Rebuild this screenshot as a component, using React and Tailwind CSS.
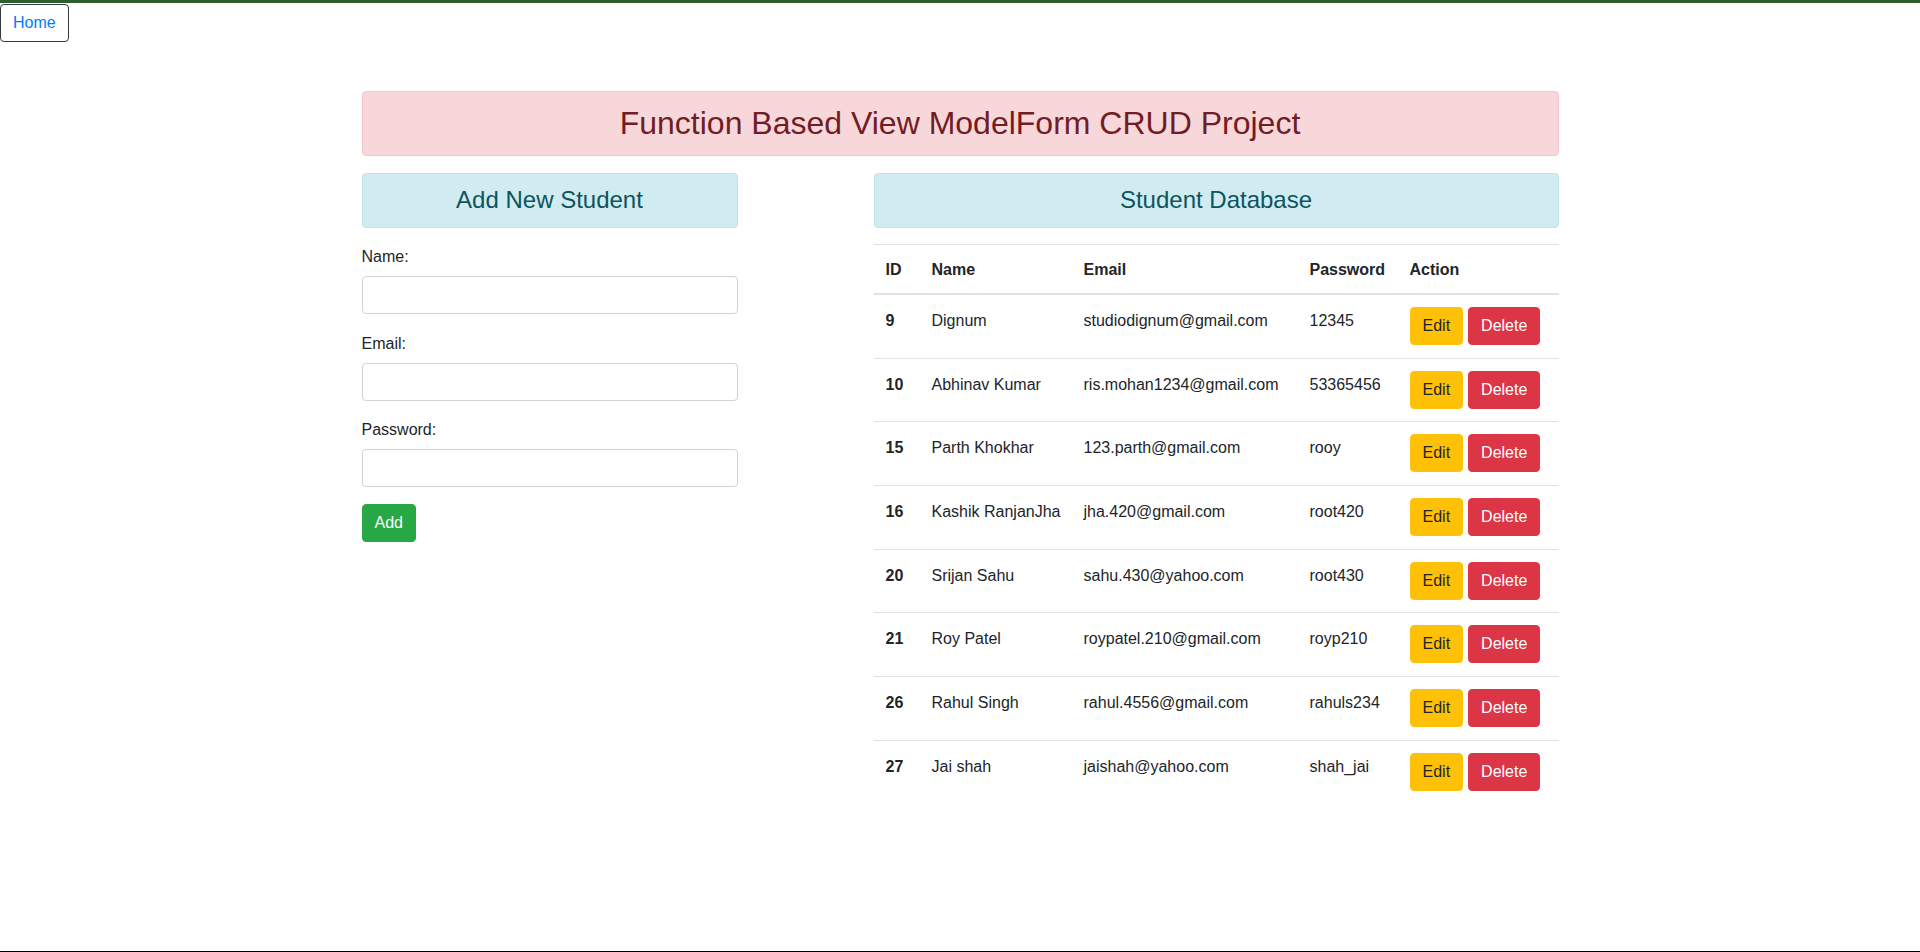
import React from "react";

const students = [
  { id: 9, name: "Dignum", email: "studiodignum@gmail.com", password: "12345" },
  { id: 10, name: "Abhinav Kumar", email: "ris.mohan1234@gmail.com", password: "53365456" },
  { id: 15, name: "Parth Khokhar", email: "123.parth@gmail.com", password: "rooy" },
  { id: 16, name: "Kashik RanjanJha", email: "jha.420@gmail.com", password: "root420" },
  { id: 20, name: "Srijan Sahu", email: "sahu.430@yahoo.com", password: "root430" },
  { id: 21, name: "Roy Patel", email: "roypatel.210@gmail.com", password: "royp210" },
  { id: 26, name: "Rahul Singh", email: "rahul.4556@gmail.com", password: "rahuls234" },
  { id: 27, name: "Jai shah", email: "jaishah@yahoo.com", password: "shah_jai" },
];

function Field({ label, type }) {
  return (
    <div className="mb-[16.5px]">
      <label className="mb-2 block pt-px leading-6">{label}</label>
      <input
        type={type}
        className="-mt-px block h-[38px] w-full rounded border border-[#ced4da] bg-white px-3 outline-none"
      />
    </div>
  );
}

function App() {
  return (
    <div
      className="min-h-[952px] border-b border-black bg-white text-base text-[#212529]"
      style={{ fontFamily: '"Liberation Sans", Arial, sans-serif' }}
    >
      {/* top bar */}
      <div className="h-[3px] bg-[#2e5e2e]"></div>

      <button className="mt-px h-[38px] rounded border border-[#343a40] px-3 text-[#007bff]">
        Home
      </button>

      <div className="mx-auto mt-[49px] w-[1197px]">
        <div className="mb-[17px] flex h-[65px] items-center justify-center rounded border border-[#f5c6cb] bg-[#f8d7da]">
          <h2 className="text-[32px] font-medium leading-[1.2] text-[#721c24]">
            Function Based View ModelForm CRUD Project
          </h2>
        </div>

        <div className="flex justify-between">
          {/* LEFT SIDE */}
          <div className="w-[376px]">
            <div className="mb-4 flex h-[55px] items-center justify-center rounded border border-[#bee5eb] bg-[#d1ecf1]">
              <h4 className="text-2xl font-medium leading-[1.2] text-[#0c5460]">
                Add New Student
              </h4>
            </div>

            <form>
              <Field label="Name:" type="text" />
              <Field label="Email:" type="email" />
              <Field label="Password:" type="password" />
              <button
                type="button"
                className="h-[38px] rounded border border-[#28a745] bg-[#28a745] px-3 text-white"
              >
                Add
              </button>
            </form>
          </div>

          {/* RIGHT SIDE */}
          <div className="w-[685px]">
            <div className="mb-4 flex h-[55px] items-center justify-center rounded border border-[#bee5eb] bg-[#d1ecf1]">
              <h4 className="text-2xl font-medium leading-[1.2] text-[#0c5460]">
                Student Database
              </h4>
            </div>

            <table className="w-full table-fixed">
              <colgroup>
                <col className="w-[46px]" />
                <col className="w-[152px]" />
                <col className="w-[226px]" />
                <col className="w-[100px]" />
                <col className="w-[161px]" />
              </colgroup>
              <thead>
                <tr>
                  <th className="border-t border-b-2 border-[#dee2e6] px-3 pt-[13px] pb-[11px] text-left align-bottom leading-6">ID</th>
                  <th className="border-t border-b-2 border-[#dee2e6] px-3 pt-[13px] pb-[11px] text-left align-bottom leading-6">Name</th>
                  <th className="border-t border-b-2 border-[#dee2e6] px-3 pt-[13px] pb-[11px] text-left align-bottom leading-6">Email</th>
                  <th className="border-t border-b-2 border-[#dee2e6] px-3 pt-[13px] pb-[11px] text-left align-bottom leading-6">Password</th>
                  <th className="border-t border-b-2 border-[#dee2e6] px-3 pt-[13px] pb-[11px] text-left align-bottom leading-6">Action</th>
                </tr>
              </thead>
              <tbody>
                {students.map((s) => (
                  <tr key={s.id}>
                    <th className="border-t border-[#dee2e6] px-3 pt-[14px] text-left align-top leading-6">{s.id}</th>
                    <td className="whitespace-nowrap border-t border-[#dee2e6] px-3 pt-[14px] align-top leading-6">{s.name}</td>
                    <td className="whitespace-nowrap border-t border-[#dee2e6] px-3 pt-[14px] align-top leading-6">{s.email}</td>
                    <td className="whitespace-nowrap border-t border-[#dee2e6] px-3 pt-[14px] align-top leading-6">{s.password}</td>
                    <td className="whitespace-nowrap border-t border-[#dee2e6] p-3 align-top">
                      <div className="flex h-[38.7px] items-start gap-[5px]">
                        <button className="h-[38px] rounded border border-[#ffc107] bg-[#ffc107] px-3 text-[#212529]">
                          Edit
                        </button>
                        <button className="h-[38px] rounded border border-[#dc3545] bg-[#dc3545] px-3 text-white">
                          Delete
                        </button>
                      </div>
                    </td>
                  </tr>
                ))}
              </tbody>
            </table>
          </div>
        </div>
      </div>
    </div>
  );
}

export default App;
